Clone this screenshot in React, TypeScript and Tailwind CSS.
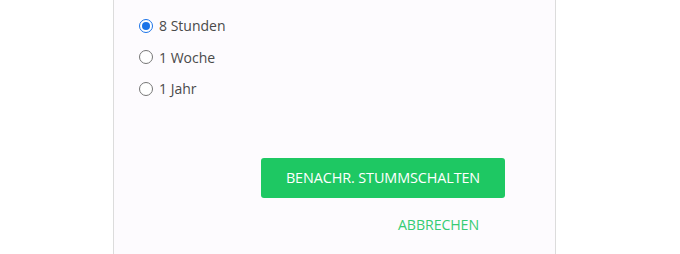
import React from "react";

function Radio({ checked, label }: { checked?: boolean; label: string }) {
  return (
    <label className="flex items-center h-[31.5px] gap-[6px]">
      {checked ? (
        <span className="w-[14px] h-[14px] rounded-full border-[1.5px] border-[#1a73e8] flex items-center justify-center bg-white">
          <span className="w-[8px] h-[8px] rounded-full bg-[#1a73e8]" />
        </span>
      ) : (
        <span className="w-[14px] h-[14px] rounded-full border border-[#767676] bg-white" />
      )}
      <span className="text-[14px] text-[#4a4a4a]">{label}</span>
    </label>
  );
}

export default function App() {
  return (
    <div className="w-[680px] h-[254px] bg-white overflow-hidden" style={{ fontFamily: '"Open Sans", "Noto Sans", sans-serif' }}>
      <div className="ml-[113px] w-[443px] h-[254px] border-x border-[#dcdcdc] bg-[#fdfbfe] flex flex-col">
        <div className="pl-[25px] pt-[10px] flex flex-col">
          <Radio checked label="8 Stunden" />
          <Radio label="1 Woche" />
          <Radio label="1 Jahr" />
        </div>
        <div className="mt-[53px] pr-[50px] flex flex-col items-end">
          <button className="w-[244px] h-[40px] rounded-[3px] bg-[#1ec863] text-white text-[14.4px] tracking-[-0.1px]">
            BENACHR. STUMMSCHALTEN
          </button>
          <button className="mt-[16px] pr-[26px] text-[14.2px] text-[#36cc74] tracking-[-0.1px]">
            ABBRECHEN
          </button>
        </div>
      </div>
    </div>
  );
}
